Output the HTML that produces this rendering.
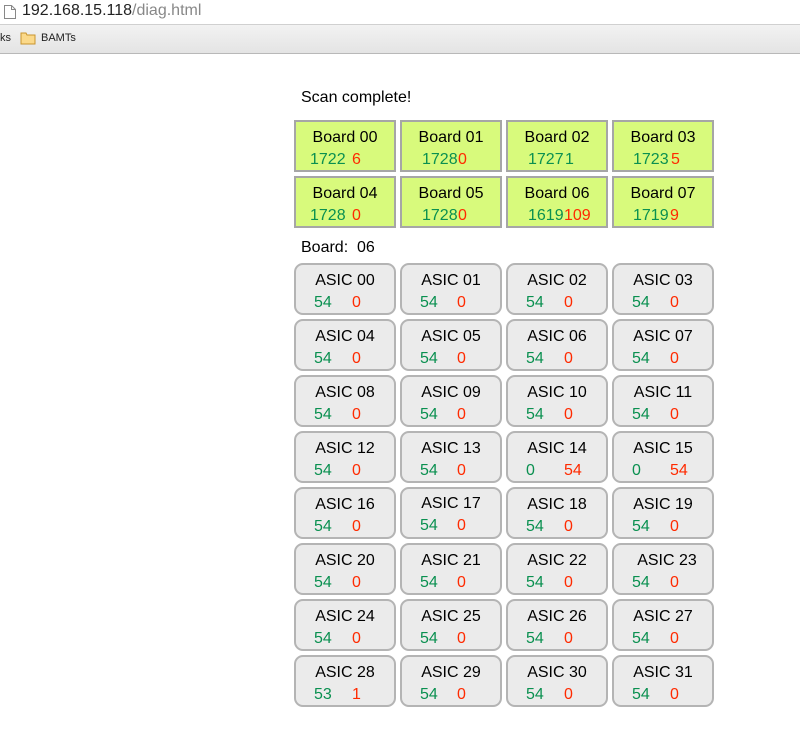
<!DOCTYPE html>
<html><head><style>
body{margin:0;width:800px;height:741px;position:relative;font-family:"Liberation Sans",Arial,sans-serif;background:#fff;overflow:hidden}
.a{position:absolute}
.b{position:absolute;width:98px;height:48px;border:2px solid #a6a6a6;background:#d8fa7c;font-size:16px}
.c{position:absolute;width:98px;height:48px;border:2px solid #b4b4b4;border-radius:9px;background:#ebebeb;font-size:16px}
.t{position:absolute;top:7px;left:0;width:98px;text-align:center;color:#000}
.g{position:absolute;top:29px;color:#0a9050}
.r{position:absolute;top:29px;color:#ff2a00}
</style></head><body>
<div class="a" style="left:0;top:0;width:800px;height:24px;background:#fff"></div>
<svg class="a" style="left:3px;top:4px" width="14" height="16"><path d="M1.5 1.5h7l4 4v9h-11z M8.5 1.5v4h4" fill="#fff" stroke="#888"/></svg>
<div class="a" style="left:22px;top:2px;font-size:16px;color:#222">192.168.15.118<span style="color:#888">/diag.html</span></div>
<div class="a" style="left:0;top:24px;width:800px;height:28px;background:linear-gradient(#f2f2f2,#e4e4e4);border-top:1px solid #d0d0d0;border-bottom:1px solid #b8b8b8"></div>
<div class="a" style="left:0;top:32px;font-size:11px;color:#222">ks</div>
<svg class="a" style="left:20px;top:31px" width="16" height="14"><path d="M1 2h5l1 2h8v9H1z" fill="#fbd98a" stroke="#c9952e"/></svg>
<div class="a" style="left:41px;top:32px;font-size:11px;color:#222">BAMTs</div>
<div class="a" style="left:301px;top:89px;font-size:16px">Scan complete!</div>
<div class="b" style="left:294px;top:120px"><div class="t">Board 00</div><span class="g" style="left:14px">1722</span><span class="r" style="left:56px">6</span></div>
<div class="b" style="left:400px;top:120px"><div class="t">Board 01</div><span class="g" style="left:20px">1728</span><span class="r" style="left:56px">0</span></div>
<div class="b" style="left:506px;top:120px"><div class="t">Board 02</div><span class="g" style="left:20px">1727</span><span class="r" style="left:57px;color:#0a9050">1</span></div>
<div class="b" style="left:612px;top:120px"><div class="t">Board 03</div><span class="g" style="left:19px">1723</span><span class="r" style="left:57px">5</span></div>
<div class="b" style="left:294px;top:176px"><div class="t">Board 04</div><span class="g" style="left:14px">1728</span><span class="r" style="left:56px">0</span></div>
<div class="b" style="left:400px;top:176px"><div class="t">Board 05</div><span class="g" style="left:20px">1728</span><span class="r" style="left:56px">0</span></div>
<div class="b" style="left:506px;top:176px"><div class="t">Board 06</div><span class="g" style="left:20px">1619</span><span class="r" style="left:56px">109</span></div>
<div class="b" style="left:612px;top:176px"><div class="t">Board 07</div><span class="g" style="left:19px">1719</span><span class="r" style="left:56px">9</span></div>
<div class="a" style="left:301px;top:239px;font-size:16px">Board:&nbsp;&nbsp;06</div>

<div class="c" style="left:294px;top:263px"><div class="t">ASIC 00</div><span class="g" style="left:18px">54</span><span class="r" style="left:56px">0</span></div>
<div class="c" style="left:400px;top:263px"><div class="t">ASIC 01</div><span class="g" style="left:18px">54</span><span class="r" style="left:55px">0</span></div>
<div class="c" style="left:506px;top:263px"><div class="t">ASIC 02</div><span class="g" style="left:18px">54</span><span class="r" style="left:56px">0</span></div>
<div class="c" style="left:612px;top:263px"><div class="t">ASIC 03</div><span class="g" style="left:18px">54</span><span class="r" style="left:56px">0</span></div>

<div class="c" style="left:294px;top:319px"><div class="t">ASIC 04</div><span class="g" style="left:18px">54</span><span class="r" style="left:56px">0</span></div>
<div class="c" style="left:400px;top:319px"><div class="t">ASIC 05</div><span class="g" style="left:18px">54</span><span class="r" style="left:55px">0</span></div>
<div class="c" style="left:506px;top:319px"><div class="t">ASIC 06</div><span class="g" style="left:18px">54</span><span class="r" style="left:56px">0</span></div>
<div class="c" style="left:612px;top:319px"><div class="t">ASIC 07</div><span class="g" style="left:18px">54</span><span class="r" style="left:56px">0</span></div>

<div class="c" style="left:294px;top:375px"><div class="t">ASIC 08</div><span class="g" style="left:18px">54</span><span class="r" style="left:56px">0</span></div>
<div class="c" style="left:400px;top:375px"><div class="t">ASIC 09</div><span class="g" style="left:18px">54</span><span class="r" style="left:55px">0</span></div>
<div class="c" style="left:506px;top:375px"><div class="t">ASIC 10</div><span class="g" style="left:18px">54</span><span class="r" style="left:56px">0</span></div>
<div class="c" style="left:612px;top:375px"><div class="t">ASIC 11</div><span class="g" style="left:18px">54</span><span class="r" style="left:56px">0</span></div>

<div class="c" style="left:294px;top:431px"><div class="t">ASIC 12</div><span class="g" style="left:18px">54</span><span class="r" style="left:56px">0</span></div>
<div class="c" style="left:400px;top:431px"><div class="t">ASIC 13</div><span class="g" style="left:18px">54</span><span class="r" style="left:55px">0</span></div>
<div class="c" style="left:506px;top:431px"><div class="t">ASIC 14</div><span class="g" style="left:18px">0</span><span class="r" style="left:56px">54</span></div>
<div class="c" style="left:612px;top:431px"><div class="t">ASIC 15</div><span class="g" style="left:18px">0</span><span class="r" style="left:56px">54</span></div>

<div class="c" style="left:294px;top:487px"><div class="t">ASIC 16</div><span class="g" style="left:18px">54</span><span class="r" style="left:56px">0</span></div>
<div class="c" style="left:400px;top:487px"><div class="t" style="top:6px">ASIC 17</div><span class="g" style="left:18px;top:28px">54</span><span class="r" style="left:55px;top:28px">0</span></div>
<div class="c" style="left:506px;top:487px"><div class="t">ASIC 18</div><span class="g" style="left:18px">54</span><span class="r" style="left:56px">0</span></div>
<div class="c" style="left:612px;top:487px"><div class="t">ASIC 19</div><span class="g" style="left:18px">54</span><span class="r" style="left:56px">0</span></div>

<div class="c" style="left:294px;top:543px"><div class="t">ASIC 20</div><span class="g" style="left:18px">54</span><span class="r" style="left:56px">0</span></div>
<div class="c" style="left:400px;top:543px"><div class="t">ASIC 21</div><span class="g" style="left:18px">54</span><span class="r" style="left:55px">0</span></div>
<div class="c" style="left:506px;top:543px"><div class="t">ASIC 22</div><span class="g" style="left:18px">54</span><span class="r" style="left:56px">0</span></div>
<div class="c" style="left:612px;top:543px"><div class="t" style="left:4px">ASIC 23</div><span class="g" style="left:18px">54</span><span class="r" style="left:56px">0</span></div>

<div class="c" style="left:294px;top:599px"><div class="t">ASIC 24</div><span class="g" style="left:18px">54</span><span class="r" style="left:56px">0</span></div>
<div class="c" style="left:400px;top:599px"><div class="t">ASIC 25</div><span class="g" style="left:18px">54</span><span class="r" style="left:55px">0</span></div>
<div class="c" style="left:506px;top:599px"><div class="t">ASIC 26</div><span class="g" style="left:18px">54</span><span class="r" style="left:56px">0</span></div>
<div class="c" style="left:612px;top:599px"><div class="t">ASIC 27</div><span class="g" style="left:18px">54</span><span class="r" style="left:56px">0</span></div>

<div class="c" style="left:294px;top:655px"><div class="t">ASIC 28</div><span class="g" style="left:18px">53</span><span class="r" style="left:56px">1</span></div>
<div class="c" style="left:400px;top:655px"><div class="t">ASIC 29</div><span class="g" style="left:18px">54</span><span class="r" style="left:55px">0</span></div>
<div class="c" style="left:506px;top:655px"><div class="t">ASIC 30</div><span class="g" style="left:18px">54</span><span class="r" style="left:56px">0</span></div>
<div class="c" style="left:612px;top:655px"><div class="t">ASIC 31</div><span class="g" style="left:18px">54</span><span class="r" style="left:56px">0</span></div>
</body></html>
